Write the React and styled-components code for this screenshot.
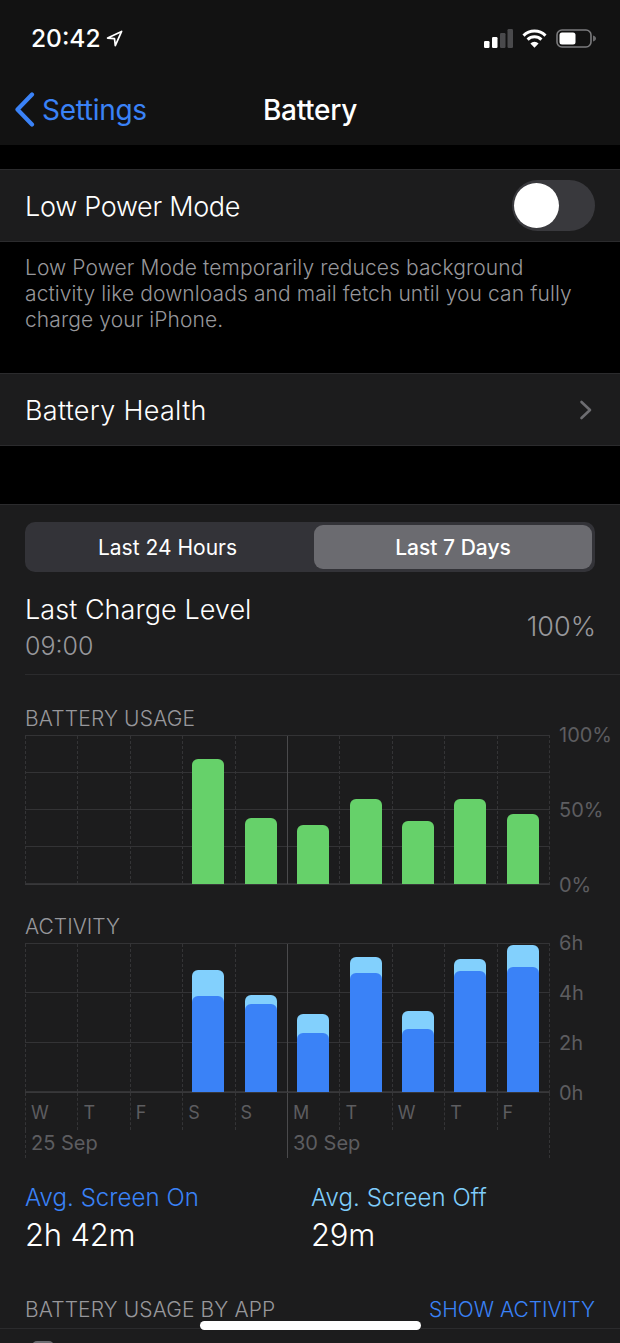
import React from 'react';
import styled, { createGlobalStyle } from 'styled-components';

const usage = [0, 0, 0, 125, 66, 59, 85, 63, 85, 70];
const activity = [
  null, null, null,
  [122, 96], [97, 88], [78, 59], [135, 119], [81, 63], [133, 121], [147, 125],
];
const dayLabels = ['W', 'T', 'F', 'S', 'S', 'M', 'T', 'W', 'T', 'F'];

const App = () => {
  return (
    <Page>
      <GlobalStyle />
      <Header>
        <StatusBar>
          <Clock>
            20:42
            <svg width="17" height="17" viewBox="0 0 17 17" fill="none">
              <path d="M15.600 1.400 1.600 8.100l6.900.6.8 6.900z" stroke="#fff" strokeWidth="1.700" strokeLinejoin="round" />
            </svg>
          </Clock>
          <StatusIcons>
            <svg width="29" height="19" viewBox="0 0 29 19">
              <rect x="0" y="12" width="5.500" height="7" rx="1.200" fill="#fff" />
              <rect x="8" y="8" width="5.500" height="11" rx="1.200" fill="#fff" />
              <rect x="16" y="4" width="5.500" height="15" rx="1.200" fill="#4a4a4c" />
              <rect x="23.500" y="0" width="5.500" height="19" rx="1.200" fill="#4a4a4c" />
            </svg>
            <svg width="25" height="19" viewBox="0 0 25 19" fill="none">
              <path d="M1.500 6.600a15.600 15.600 0 0 1 22 0" stroke="#fff" strokeWidth="3" />
              <path d="M5.600 10.600a9.800 9.800 0 0 1 13.800 0" stroke="#fff" strokeWidth="3" />
              <path d="M12.500 18.800 8.400 14.400a5.900 5.900 0 0 1 8.200 0z" fill="#fff" />
            </svg>
            <svg width="41" height="19" viewBox="0 0 41 19">
              <rect x="1" y="1" width="34" height="17" rx="5" fill="none" stroke="#7b7b7d" strokeWidth="1.600" />
              <rect x="3.500" y="3.500" width="16" height="12" rx="2.500" fill="#fff" />
              <path d="M37 6.500c2 .5 3 1.600 3 3s-1 2.500-3 3z" fill="#6a6a6c" />
            </svg>
          </StatusIcons>
        </StatusBar>
        <NavBar>
          <BackLink>
            <svg width="21" height="35" viewBox="0 0 21 35" fill="none">
              <path d="M18 2.500 3.500 17.500 18 32.500" stroke="#3a82f7" strokeWidth="4.200" strokeLinecap="round" strokeLinejoin="round" />
            </svg>
            <span>Settings</span>
          </BackLink>
          <NavTitle>Battery</NavTitle>
        </NavBar>
      </Header>

      <Gap $h={24} />
      <Cell>
        <CellLabel $track={-0.3}>Low Power Mode</CellLabel>
        <Toggle><Knob /></Toggle>
      </Cell>
      <Footnote>
        Low Power Mode temporarily reduces background activity like downloads and mail fetch until you can fully charge your iPhone.
      </Footnote>
      <Cell>
        <CellLabel $track={0.3}>Battery Health</CellLabel>
        <Chevron width="14" height="20" viewBox="0 0 14 20" fill="none">
          <path d="M2.500 2 11 10l-8.500 8" stroke="#6d6d71" strokeWidth="2.600" strokeLinecap="round" strokeLinejoin="round" />
        </Chevron>
      </Cell>
      <Gap $h={58} />

      <Panel>
        <Segmented>
          <Segment $shift={7}>Last 24 Hours</Segment>
          <Segment $active>Last 7 Days</Segment>
        </Segmented>

        <ChargeRow>
          <div>
            <ChargeTitle>Last Charge Level</ChargeTitle>
            <ChargeTime>09:00</ChargeTime>
          </div>
          <ChargeValue>100%</ChargeValue>
        </ChargeRow>

        <UsageHeading>BATTERY USAGE</UsageHeading>
        <ChartRow>
          <Plot $rows={4}>
            {usage.map((h, i) => (
              <Day key={i} $solid={i === 5}>
                {h > 0 && <GreenBar $h={h} />}
              </Day>
            ))}
          </Plot>
          <YAxis $h={150}>
            <span>100%</span>
            <span>50%</span>
            <span>0%</span>
          </YAxis>
        </ChartRow>

        <ActivityHeading>ACTIVITY</ActivityHeading>
        <ChartRow>
          <Plot $rows={3}>
            {activity.map((b, i) => (
              <Day key={i} $solid={i === 5}>
                {b && (
                  <LightBar $h={b[0]}>
                    <BlueFill $h={b[1]} />
                  </LightBar>
                )}
              </Day>
            ))}
          </Plot>
          <YAxis $h={150}>
            <span>6h</span>
            <span>4h</span>
            <span>2h</span>
            <span>0h</span>
          </YAxis>
        </ChartRow>
        <DayRow>
          {dayLabels.map((d, i) => (
            <DayLabel key={i} $solid={i === 5}>{d}</DayLabel>
          ))}
        </DayRow>
        <DateRow>
          <DateLabel>25 Sep</DateLabel>
          <DateLabel $solid>30 Sep</DateLabel>
        </DateRow>

        <Stats>
          <div>
            <StatName $color="#3a82f7">Avg. Screen On</StatName>
            <StatValue>2h 42m</StatValue>
          </div>
          <div>
            <StatName $color="#7fcdfb">Avg. Screen Off</StatName>
            <StatValue>29m</StatValue>
          </div>
        </Stats>

        <ByAppRow>
          <ByAppHeading>BATTERY USAGE BY APP</ByAppHeading>
          <ShowActivity>SHOW ACTIVITY</ShowActivity>
        </ByAppRow>
      </Panel>

      <AppList>
        <AppIcon />
      </AppList>
      <HomeIndicator />
    </Page>
  );
};

const GlobalStyle = createGlobalStyle`
  * { box-sizing: border-box; }
  html, body { margin: 0; background: #000; }
  body { font-family: "Inter", "Liberation Sans", sans-serif; color: #fff; }
`;

const Page = styled.div`
  position: relative;
  width: 620px;
  height: 1343px;
  overflow: hidden;
  background: #000;
`;
const Header = styled.header`
  height: 145px;
  background: #121212;
`;
const StatusBar = styled.div`
  height: 76px;
  display: flex;
  justify-content: space-between;
  align-items: center;
  padding: 0 23px 0 31px;
`;
const Clock = styled.div`
  display: flex;
  align-items: center;
  gap: 5px;
  font-size: 24.500px;
  font-weight: 500;
`;
const StatusIcons = styled.div`
  display: flex;
  align-items: center;
  gap: 9px;
`;
const NavBar = styled.nav`
  position: relative;
  height: 69px;
  display: flex;
  align-items: center;
  justify-content: center;
`;
const BackLink = styled.div`
  position: absolute;
  left: 14px;
  top: 16px;
  display: flex;
  align-items: center;
  gap: 7px;
  color: #3a82f7;
  font-size: 28px;
  letter-spacing: -0.3px;
`;
const NavTitle = styled.div`
  padding-bottom: 2px;
  font-size: 28px;
  font-weight: 500;
  letter-spacing: -0.3px;
`;
const Gap = styled.div`
  height: ${p => p.$h}px;
`;
const Cell = styled.div`
  height: 73px;
  display: flex;
  align-items: center;
  justify-content: space-between;
  padding: 0 25px;
  background: #1c1c1d;
  border-top: 1px solid #2b2b2d;
  border-bottom: 1px solid #2b2b2d;
`;
const CellLabel = styled.div`
  padding-top: 2px;
  font-size: 27px;
  font-weight: 300;
  letter-spacing: ${p => p.$track}px;
`;
const Chevron = styled.svg`
  margin-right: 2px;
`;
const Toggle = styled.div`
  width: 83px;
  height: 51px;
  padding: 3px 2px;
  border-radius: 26px;
  background: #39393d;
`;
const Knob = styled.div`
  width: 45px;
  height: 45px;
  border-radius: 50%;
  background: #fff;
`;
const Footnote = styled.p`
  height: 131px;
  margin: 0;
  padding: 13px 30px 0 25px;
  font-size: 21px;
  font-weight: 300;
  line-height: 26px;
  letter-spacing: 0.1px;
  color: #97979b;
`;
const Panel = styled.section`
  height: 825px;
  padding: 17px 25px 0;
  background: #1c1c1d;
  border-top: 1px solid #2b2b2d;
  border-bottom: 1px solid #2b2b2d;
`;
const Segmented = styled.div`
  height: 50px;
  display: grid;
  grid-template-columns: 1fr 278px;
  padding: 3px;
  border-radius: 10px;
  background: #333338;
`;
const Segment = styled.div`
  display: flex;
  align-items: center;
  justify-content: center;
  padding-right: ${p => p.$shift || 0}px;
  border-radius: 9px;
  font-size: 21px;
  font-weight: ${p => (p.$active ? 500 : 400)};
  background: ${p => (p.$active ? '#6b6b70' : 'transparent')};
`;
const ChargeRow = styled.div`
  height: 103px;
  margin-right: -25px;
  padding: 20px 24px 0 0;
  display: flex;
  justify-content: space-between;
  border-bottom: 1px solid #2b2b2d;
`;
const ChargeTitle = styled.div`
  font-size: 27px;
  font-weight: 300;
  line-height: 36px;
  letter-spacing: 0.05px;
`;
const ChargeTime = styled.div`
  font-size: 25px;
  font-weight: 300;
  line-height: 36px;
  color: #97979b;
`;
const ChargeValue = styled.div`
  margin-top: 17px;
  font-size: 27px;
  font-weight: 300;
  line-height: 36px;
  color: #97979b;
`;
const Heading = styled.div`
  font-size: 21px;
  font-weight: 300;
  line-height: 26px;
  color: #97979b;
`;
const UsageHeading = styled(Heading)`
  margin-top: 31px;
  height: 29px;
  letter-spacing: 0.15px;
`;
const ActivityHeading = styled(Heading)`
  margin-top: 29px;
  height: 29px;
`;
const ByAppHeading = styled(Heading)`
  letter-spacing: 0.1px;
`;
const ChartRow = styled.div`
  display: flex;
  align-items: flex-start;
  gap: 9px;
`;
const Plot = styled.div`
  flex: none;
  width: 525px;
  height: 150px;
  display: grid;
  grid-template-columns: repeat(10, 1fr);
  border-top: 1px solid #333335;
  border-bottom: 1px solid #38383a;
  border-right: 1px dashed #343436;
  background: repeating-linear-gradient(
    to bottom,
    transparent 0,
    transparent calc(${p => 148 / p.$rows}px - 1px),
    #333335 calc(${p => 148 / p.$rows}px - 1px),
    #333335 ${p => 148 / p.$rows}px
  );
`;
const Day = styled.div`
  display: flex;
  align-items: flex-end;
  justify-content: center;
  padding-right: 1px;
  border-left: 1px ${p => (p.$solid ? 'solid #4a4a4c' : 'dashed #343436')};
`;
const GreenBar = styled.div`
  width: 32px;
  height: ${p => p.$h}px;
  border-radius: 6px 6px 0 0;
  background: #66d16a;
`;
const LightBar = styled.div`
  width: 32px;
  height: ${p => p.$h}px;
  display: flex;
  align-items: flex-end;
  border-radius: 6px 6px 0 0;
  background: #82d0fd;
`;
const BlueFill = styled.div`
  width: 100%;
  height: ${p => p.$h}px;
  border-radius: 6px 6px 0 0;
  background: #3a82f7;
`;
const YAxis = styled.div`
  flex: none;
  height: ${p => p.$h + 24}px;
  margin: -12px 0 -12px 0;
  display: flex;
  flex-direction: column;
  justify-content: space-between;
  font-size: 20px;
  line-height: 24px;
  color: #5d5d60;
`;
const DayRow = styled.div`
  width: 525px;
  height: 37px;
  display: grid;
  grid-template-columns: repeat(10, 1fr);
  border-right: 1px dashed #343436;
`;
const DayLabel = styled.div`
  padding: 8px 0 0 5px;
  font-size: 18px;
  line-height: 24px;
  color: #5d5d60;
  border-left: 1px ${p => (p.$solid ? 'solid #4a4a4c' : 'dashed #343436')};
`;
const DateRow = styled.div`
  width: 525px;
  height: 28px;
  display: grid;
  grid-template-columns: 1fr 1fr;
  border-right: 1px dashed #343436;
`;
const DateLabel = styled.div`
  padding: 1px 0 0 5px;
  font-size: 20px;
  line-height: 24px;
  color: #5d5d60;
  border-left: 1px ${p => (p.$solid ? 'solid #4a4a4c' : 'dashed #343436')};
`;
const Stats = styled.div`
  margin-top: 23px;
  display: grid;
  grid-template-columns: 286px 1fr;
`;
const StatName = styled.div`
  font-size: 24px;
  font-weight: 300;
  line-height: 34px;
  letter-spacing: 0.05px;
  color: ${p => p.$color};
`;
const StatValue = styled.div`
  font-size: 31px;
  font-weight: 300;
  line-height: 40px;
  letter-spacing: -0.2px;
`;
const ByAppRow = styled.div`
  margin-top: 42px;
  display: flex;
  justify-content: space-between;
`;
const ShowActivity = styled.div`
  font-size: 21px;
  font-weight: 300;
  line-height: 26px;
  color: #3a82f7;
`;
const AppList = styled.div`
  height: 14px;
  padding: 12px 0 0 32px;
  background: #1c1c1d;
`;
const AppIcon = styled.div`
  width: 22px;
  height: 22px;
  border-radius: 5px;
  background: #6b6b70;
`;
const HomeIndicator = styled.div`
  position: absolute;
  left: 200px;
  top: 1321px;
  width: 221px;
  height: 9px;
  border-radius: 5px;
  background: #fff;
`;

export default App;
